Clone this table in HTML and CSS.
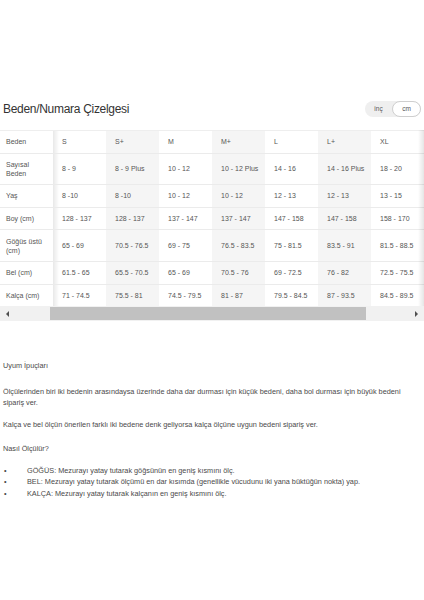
FILE: index.html
```html
<!DOCTYPE html>
<html lang="tr">
<head>
<meta charset="utf-8">
<title>Beden/Numara Çizelgesi</title>
<link rel="stylesheet" href="styles.css">
</head>
<body>
<div class="page">
  <div class="head">
    <h1 class="title">Beden/Numara Çizelgesi</h1>
    <div class="toggle">
      <span class="opt">inç</span>
      <span class="opt active">cm</span>
    </div>
  </div>

  <div class="table-wrap">
    <table class="chart">
      <tr><td>Beden</td><td>S</td><td>S+</td><td>M</td><td>M+</td><td>L</td><td>L+</td><td>XL</td></tr>
      <tr><td>Sayısal Beden</td><td>8 - 9</td><td>8 - 9 Plus</td><td>10 - 12</td><td>10 - 12 Plus</td><td>14 - 16</td><td>14 - 16 Plus</td><td>18 - 20</td></tr>
      <tr><td>Yaş</td><td>8 -10</td><td>8 -10</td><td>10 - 12</td><td>10 - 12</td><td>12 - 13</td><td>12 - 13</td><td>13 - 15</td></tr>
      <tr><td>Boy (cm)</td><td>128 - 137</td><td>128 - 137</td><td>137 - 147</td><td>137 - 147</td><td>147 - 158</td><td>147 - 158</td><td>158 - 170</td></tr>
      <tr><td>Göğüs üstü (cm)</td><td>65 - 69</td><td>70.5 - 76.5</td><td>69 - 75</td><td>76.5 - 83.5</td><td>75 - 81.5</td><td>83.5 - 91</td><td>81.5 - 88.5</td></tr>
      <tr><td>Bel (cm)</td><td>61.5 - 65</td><td>65.5 - 70.5</td><td>65 - 69</td><td>70.5 - 76</td><td>69 - 72.5</td><td>76 - 82</td><td>72.5 - 75.5</td></tr>
      <tr><td>Kalça (cm)</td><td>71 - 74.5</td><td>75.5 - 81</td><td>74.5 - 79.5</td><td>81 - 87</td><td>79.5 - 84.5</td><td>87 - 93.5</td><td>84.5 - 89.5</td></tr>
    </table>
  </div>

  <div class="sbar">
    <div class="sbar-btn"><span class="arrow-left"></span></div>
    <div class="sbar-track"><div class="sbar-thumb"></div></div>
    <div class="sbar-btn"><span class="arrow-right"></span></div>
  </div>

  <div class="tips">
    <p class="t-head">Uyum İpuçları</p>
    <p class="t-p1">Ölçülerinden biri iki bedenin arasındaysa üzerinde daha dar durması için küçük bedeni, daha bol durması için büyük bedeni sipariş ver.</p>
    <p class="t-p2">Kalça ve bel ölçün önerilen farklı iki bedene denk geliyorsa kalça ölçüne uygun bedeni sipariş ver.</p>
    <p class="t-head2">Nasıl Ölçülür?</p>
    <ul class="t-list">
      <li><span class="dot">•</span><span>GÖĞÜS: Mezurayı yatay tutarak göğsünün en geniş kısmını ölç.</span></li>
      <li><span class="dot">•</span><span>BEL: Mezurayı yatay tutarak ölçümü en dar kısımda (genellikle vücudunu iki yana büktüğün nokta) yap.</span></li>
      <li><span class="dot">•</span><span>KALÇA: Mezurayı yatay tutarak kalçanın en geniş kısmını ölç.</span></li>
    </ul>
  </div>
</div>
</body>
</html>
```

FILE: styles.css
```css
* { box-sizing: border-box; }

html, body {
  margin: 0;
  padding: 0;
  background: #fff;
}

body {
  font-family: "Liberation Sans", Arial, sans-serif;
  color: #444;
}

.page {
  width: 424px;
  padding-top: 101px;
}

.head {
  display: flex;
  align-items: center;
  justify-content: space-between;
  height: 16px;
  padding: 0 3px;
  margin-bottom: 13px;
}

.title {
  margin: 0;
  font-size: 12px;
  font-weight: normal;
  letter-spacing: -0.3px;
  color: #333;
  line-height: 16px;
}

.toggle {
  display: flex;
  align-items: center;
  height: 16px;
  width: 56px;
  background: #efefef;
  border-radius: 8px;
}

.opt {
  flex: 1;
  height: 16px;
  line-height: 16px;
  text-align: center;
  font-size: 6.5px;
  color: #555;
}

.opt.active {
  background: #fff;
  border: 1px solid #cfcfcf;
  border-radius: 8px;
  line-height: 14px;
}

.table-wrap {
  position: relative;
  width: 424px;
  overflow: hidden;
}

.table-wrap::after {
  content: "";
  position: absolute;
  top: 0;
  right: 0;
  bottom: 0;
  width: 6px;
  background: linear-gradient(to right, rgba(0,0,0,0), rgba(0,0,0,0.1));
}

.chart {
  border-collapse: collapse;
  table-layout: fixed;
  width: 424px;
  font-size: 7px;
  color: #555;
  border-top: 1px solid #eeeeee;
}

.chart td {
  width: 53px;
  padding: 6.3px 2px 6.3px 9px;
  line-height: 9px;
  border-bottom: 1px solid #ebebeb;
  white-space: nowrap;
  vertical-align: middle;
}

.chart td:first-child {
  padding: 6.3px 7px 6.3px 6px;
  white-space: normal;
  background: #fff;
}

.chart td:nth-child(2) {
  background: linear-gradient(to right, rgba(0,0,0,0.09), rgba(0,0,0,0) 6px), #fff;
}

.chart td:nth-child(3),
.chart td:nth-child(5),
.chart td:nth-child(7) {
  background: #f5f5f5;
}

.chart tr:last-child td {
  border-bottom: none;
}

.sbar {
  display: flex;
  height: 15px;
  background: #f1f1f1;
}

.sbar-btn {
  width: 15px;
  display: flex;
  align-items: center;
  justify-content: center;
}

.arrow-left {
  width: 0;
  height: 0;
  border-top: 3px solid transparent;
  border-bottom: 3px solid transparent;
  border-right: 3px solid #505050;
}

.arrow-right {
  width: 0;
  height: 0;
  border-top: 3px solid transparent;
  border-bottom: 3px solid transparent;
  border-left: 3px solid #505050;
}

.sbar-track {
  flex: 1;
  padding: 1px 0 1px 35px;
}

.sbar-thumb {
  width: 316px;
  height: 13px;
  background: #c1c1c1;
}

.tips {
  padding: 0 3px;
  font-size: 7.3px;
  line-height: 11.5px;
  color: #4a4a4a;
}

.tips p {
  margin: 0;
}

.t-head { margin-top: 39px !important; }
.t-p1 { margin-top: 14px !important; width: 418px; }
.t-p2 { margin-top: 10px !important; }
.t-head2 { margin-top: 13px !important; }

.t-list {
  list-style: none;
  margin: 10px 0 0;
  padding: 0;
}

.t-list li {
  display: flex;
}

.dot {
  width: 24px;
  flex: none;
  padding-left: 1px;
}
```
